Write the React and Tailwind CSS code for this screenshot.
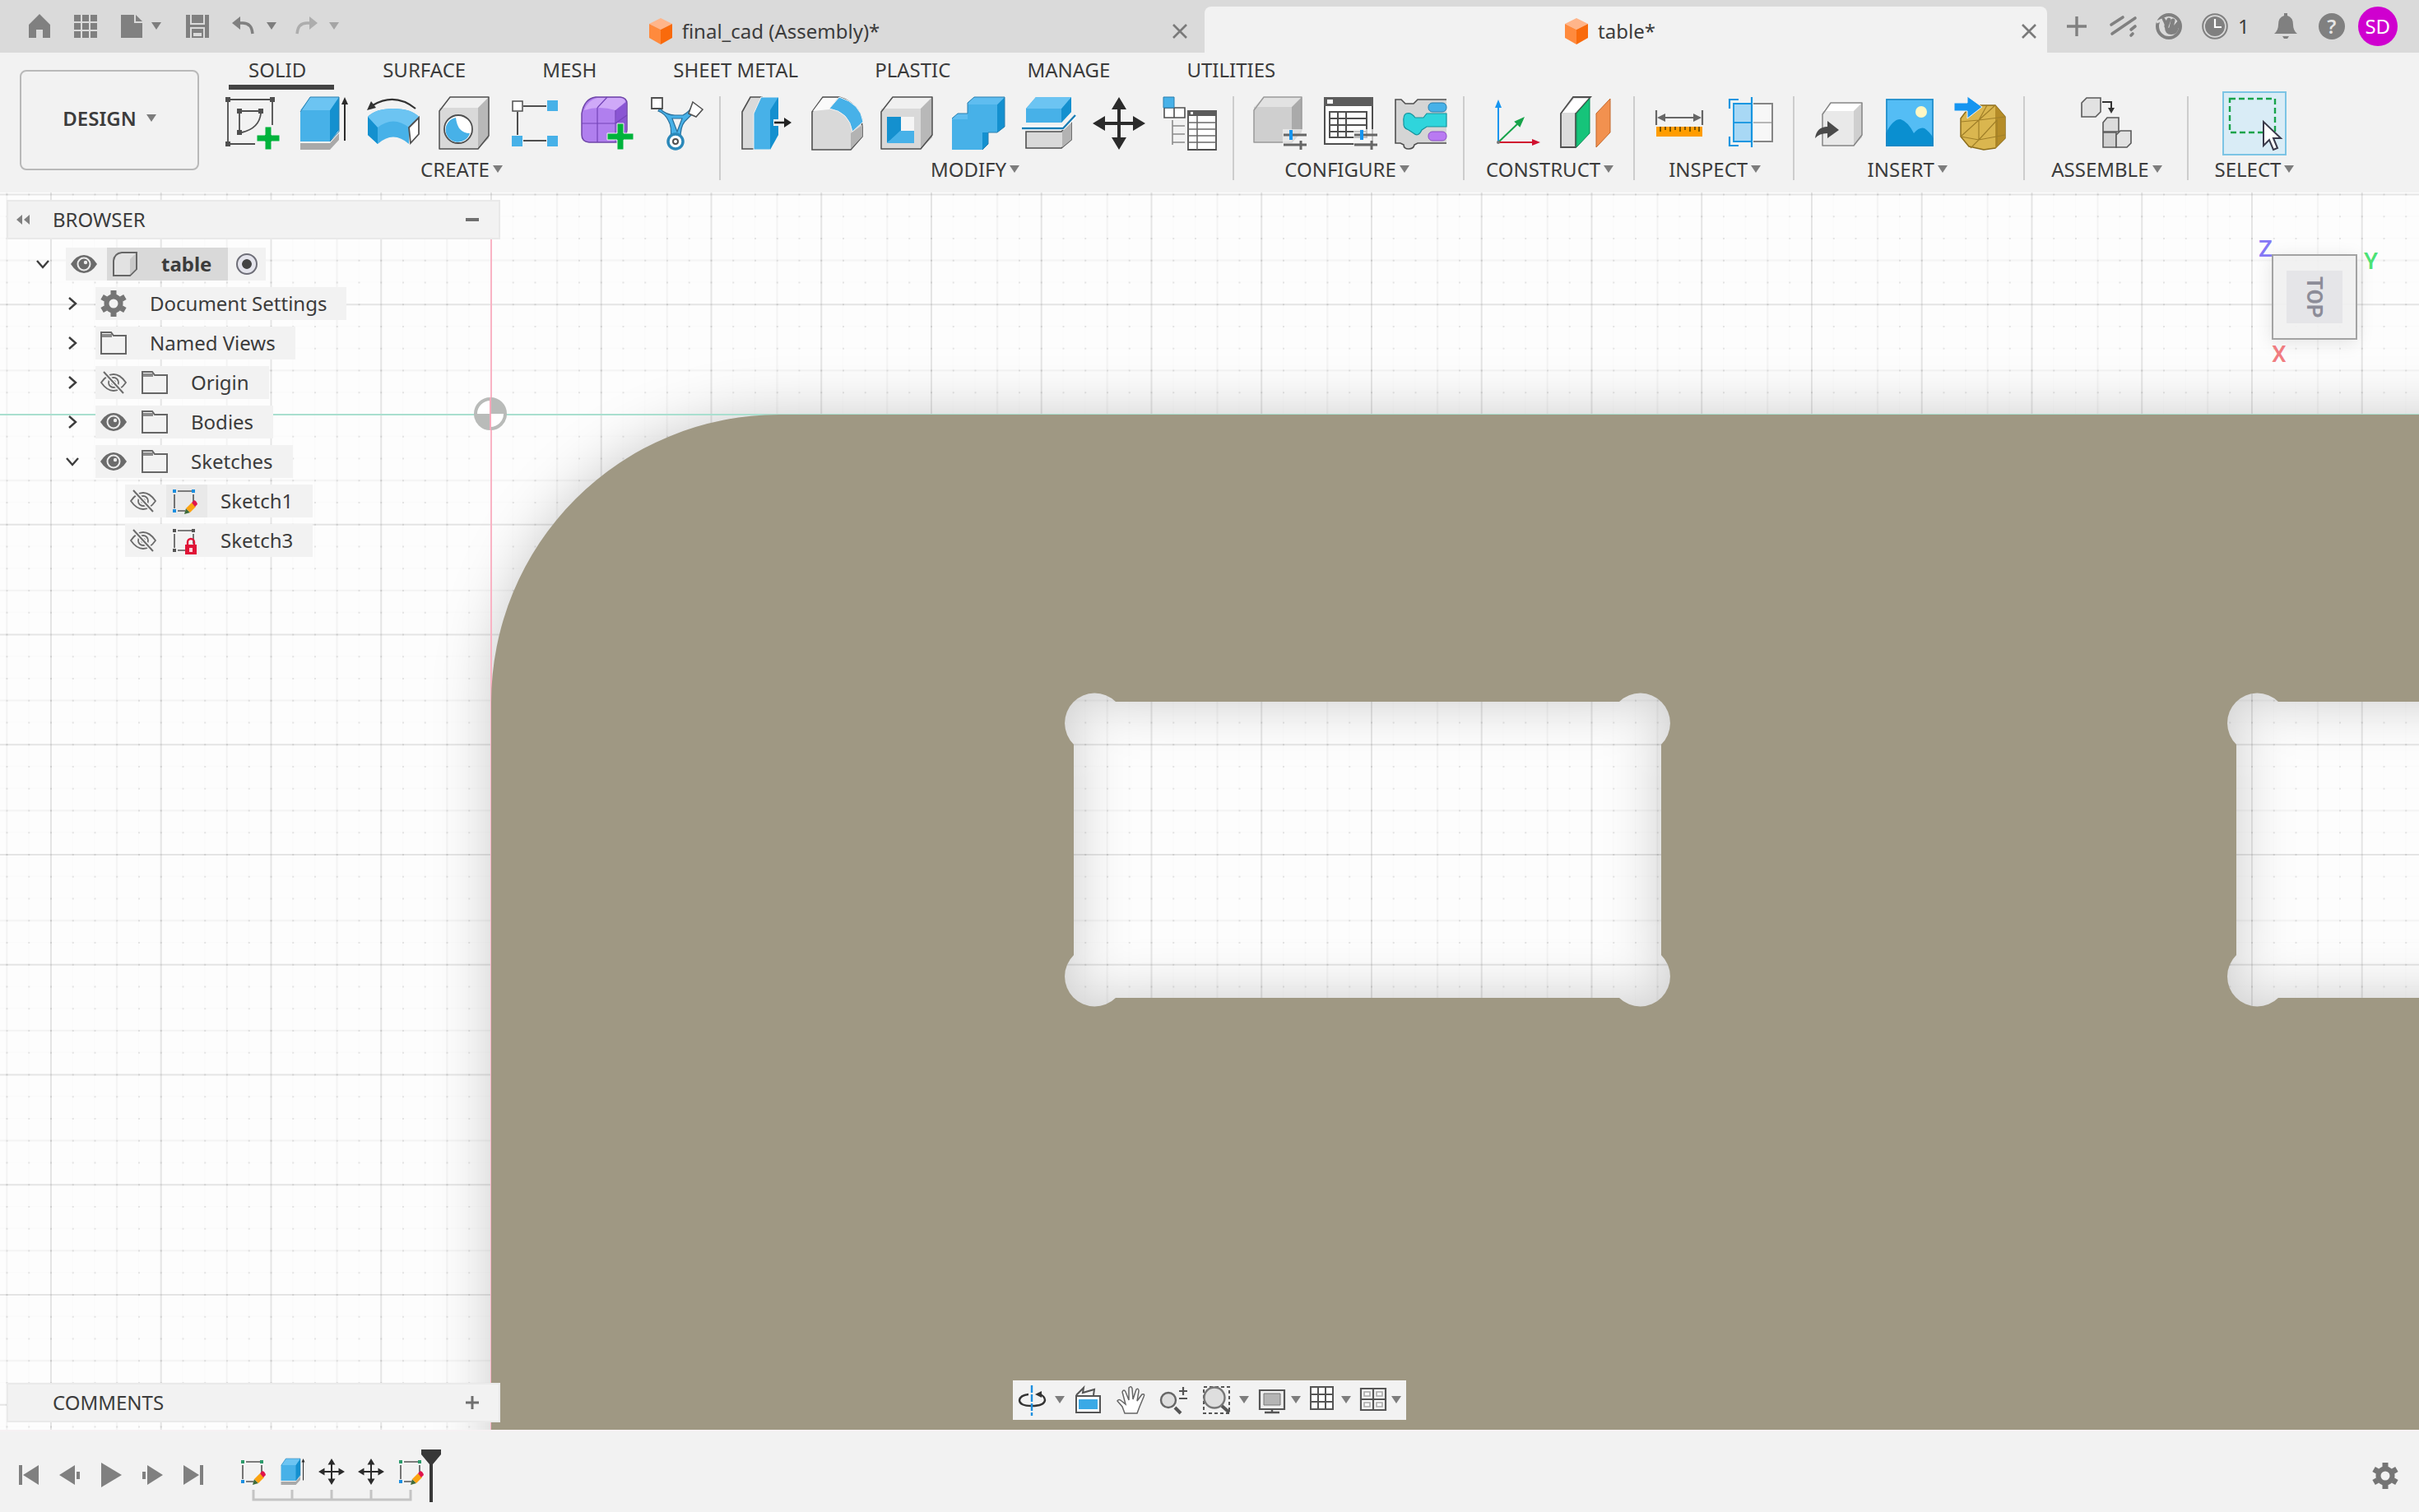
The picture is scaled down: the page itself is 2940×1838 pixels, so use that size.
import React, { useState } from 'react';
import clsx from 'clsx';

const BLUE = '#47b1e8';
const DARK_BLUE = '#1490cf';
const LINE = '#4f4f4f';

// ---------- small shared glyphs ----------

function Caret({ className = 'text-[#7d7d7d]' }) {
  return (
    <svg viewBox="0 0 12 10" className={clsx('w-3 h-[10px] shrink-0', className)} fill="currentColor">
      <path d="M0 0H12L6 9Z" />
    </svg>
  );
}

function Icon({ size = 'w-16 h-16', box = '0 0 64 64', children }) {
  return (
    <svg viewBox={box} className={clsx('shrink-0 overflow-visible', size)} fill="none" aria-hidden="true">
      {children}
    </svg>
  );
}

function Plus({ x, y, r = 14 }) {
  return (
    <path
      d={`M${x - 4} ${y - r}h8v${r - 4}h${r - 4}v8h-${r - 4}v${r - 4}h-8v-${r - 4}h-${r - 4}v-8h${r - 4}z`}
      fill="#00b33c"
      stroke="#f2f2f2"
      strokeWidth="1"
    />
  );
}

function Cube({ x = 0, y = 0, w = 48, h = 48, d = 14, front = '#d9d9d9', top = '#f0f0f0', side = '#b8b8b8', stroke = LINE }) {
  return (
    <g stroke={stroke} strokeWidth="1.5" strokeLinejoin="round">
      <path d={`M${x} ${y + d}L${x + d} ${y}H${x + w + d}L${x + w} ${y + d}Z`} fill={top} stroke="none" />
      <path d={`M${x + w} ${y + d}L${x + w + d} ${y}V${y + h}L${x + w} ${y + h + d}Z`} fill={side} stroke="none" />
      <path d={`M${x} ${y + d}H${x + w}V${y + h + d}H${x}Z`} fill={front} stroke="none" />
      <path d={`M${x} ${y + d + 4}L${x + d} ${y}H${x + w + d}V${y + h - 3}L${x + w} ${y + h + d}H${x}Z`} />
    </g>
  );
}

function Sliders() {
  return (
    <g>
      <path d="M37 39h28v25h-28z" fill="#f2f2f2" opacity="0.7" />
      <path d="M38 46h28M38 58h28M59 53v11" stroke="#666" strokeWidth="3" />
      <path d="M47 40v12" stroke="#1595f0" strokeWidth="4" />
    </g>
  );
}

function MoveGlyph() {
  return (
    <g fill="#2b2b2b">
      <path d="M30 12h4v40h-4z" />
      <path d="M12 30h40v4h-40z" />
      <path d="M32 0l9 15h-18zM32 64l9-15h-18zM0 32l15-9v18zM64 32l-15-9v18z" />
    </g>
  );
}

function SketchGlyph({ accent = '#1c8fe0', top = '#1c8fe0', badge = 'pencil' }) {
  return (
    <g>
      <path d="M4 4H27M4 4V28M27 4V20M4 28H17" stroke="#555" strokeWidth="1.6" strokeDasharray="17 4" strokeDashoffset="-4" />
      <path d="M2 2h4v4h-4zM25 2h4v4h-4z" fill={top} />
      <path d="M2 26h4v4h-4z" fill={accent} />
      {badge === 'pencil' && (
        <g>
          <path d="M16 32l2-7 5 5z" fill="#3f6b3a" />
          <path d="M18 25l7-7 5 5-7 7z" fill="#fba311" />
          <path d="M25 18l3-3q3 1 4 5l-3 3z" fill="#e0144c" />
        </g>
      )}
      {badge === 'lock' && (
        <g>
          <path d="M20 22v-4a4 4 0 0 1 8 0v4" stroke="#e01336" strokeWidth="2.4" />
          <path d="M17 21h14v12h-14z" fill="#e01336" />
          <path d="M22 25h4v5h-4z" fill="#ffd0d8" />
        </g>
      )}
    </g>
  );
}

function ExtrudeGlyph() {
  return (
    <g>
      <path d="M5 56H41L52 44V52L41 64H5Z" fill="#a9a9a9" />
      <path d="M5 18L17 0H52V40L41 54H5Z" fill={BLUE} />
      <path d="M41 16L52 0V40L41 54Z" fill={DARK_BLUE} />
      <path d="M5 16L17 0H52L41 16Z" fill="#6cc4f2" />
      <path d="M5 18L17 0H52V42L41 54" stroke="#2a7fae" strokeWidth="1" />
      <path d="M59 6V53" stroke="#2b2b2b" strokeWidth="2" />
      <path d="M59 0l4 9h-8z" fill="#2b2b2b" />
    </g>
  );
}

// ---------- ribbon icons ----------

const ICONS = {
  sketch: (
    <g>
      <path d="M6 3H54M3 6V54M57 6V34M6 57H36M20 17H40M17 20V40M43 20Q41 38 20 43" stroke={LINE} strokeWidth="1.8" />
      <path d="M0 0h6v6h-6zM54 0h6v6h-6zM0 54h6v6h-6zM14 14h6v6h-6zM40 14h6v6h-6zM14 40h6v6h-6z" fill={LINE} />
      <Plus x={52} y={50} />
    </g>
  ),
  extrude: <ExtrudeGlyph />,
  revolve: (
    <g>
      <path d="M1 24Q10 14 32 14Q54 14 63 24L51 36V57Q32 40 13 57L1 46Z" fill={BLUE} />
      <path d="M1 24Q10 14 32 14Q54 14 63 24L51 37Q32 22 13 37Z" fill="#6cc4f2" />
      <path d="M1 24L13 37V57L1 46Z" fill={DARK_BLUE} />
      <path d="M51 37L63 25V45L53 56Z" fill="#fff" stroke={LINE} strokeWidth="1.8" />
      <path d="M59 14Q34 -6 7 10" stroke="#333" strokeWidth="2.2" />
      <path d="M0 16l5-11 6 8z" fill="#333" />
    </g>
  ),
  hole: (
    <g>
      <Cube x={2} y={0} w={47} h={50} d={13} />
      <circle cx="25" cy="39" r="17" fill="#fff" stroke={LINE} strokeWidth="1.8" />
      <path d="M22 25A15 15 0 1 0 39 44Q24 44 22 25Z" fill={BLUE} />
    </g>
  ),
  pattern: (
    <g>
      <path d="M18 11H46M11 18V46M18 53H46" stroke={LINE} strokeWidth="2" />
      <path d="M5 5h12v12h-12z" fill="#fff" stroke={LINE} strokeWidth="1.5" />
      <path d="M47 4h13v13h-13zM4 47h13v13h-13zM47 47h13v13h-13z" fill={BLUE} />
    </g>
  ),
  form: (
    <g>
      <path d="M3 20Q6 2 20 0H50Q58 1 58 8V40Q56 54 46 55H12Q3 54 3 46Z" fill="#b07fee" stroke="#6f46a8" strokeWidth="1.5" />
      <path d="M6 16Q10 4 22 1H50Q56 2 56 6L44 16Q24 10 6 16Z" fill="#cfa9f8" />
      <path d="M44 16L57 6V40Q55 50 46 54Z" fill="#8a55d3" />
      <path d="M3 32H44L58 22M22 13V55M22 13L34 0M44 16V54" stroke="#7444b8" strokeWidth="1.2" />
      <Plus x={50} y={48} r={16} />
    </g>
  ),
  joint: (
    <g>
      <path d="M12 14Q20 22 30 22H40Q48 18 50 12L54 18Q46 26 42 30Q37 36 37 50H25Q27 36 22 28Q18 20 10 17Z" fill={BLUE} stroke="#2a6f9a" strokeWidth="1.2" />
      <path d="M27 26H39L33 42Z" fill="#f2f2f2" stroke="#2a6f9a" strokeWidth="1.2" />
      <path d="M2 1h13v13h-13z" fill="#fff" stroke={LINE} strokeWidth="1.8" />
      <path d="M52 6L64 15L56 24L47 20Z" fill="#fff" stroke={LINE} strokeWidth="1.5" />
      <circle cx="31" cy="54" r="9" fill="#fff" stroke="#2b88b9" strokeWidth="3.5" />
      <circle cx="31" cy="54" r="3" fill="#fff" stroke={LINE} strokeWidth="2" />
    </g>
  ),
  pressPull: (
    <g>
      <path d="M4 18L14 0H28V63H4Z" fill="#dadada" stroke={LINE} strokeWidth="1.6" />
      <path d="M18 20L27 0H48V46L38 64H18Z" fill={BLUE} stroke="#f2f2f2" strokeWidth="1" />
      <path d="M38 16L48 0V46L38 64Z" fill={DARK_BLUE} />
      <path d="M42 27h20v8h-20z" fill="#f2f2f2" />
      <path d="M43 31H58" stroke="#222" strokeWidth="2.6" />
      <path d="M64 31l-9-6v12z" fill="#222" />
    </g>
  ),
  fillet: (
    <g>
      <path d="M3 18L16 0H36Q62 8 64 36V48L50 64H3Z" fill="#d9d9d9" stroke={LINE} strokeWidth="1.6" />
      <path d="M50 44L64 34V48L50 63Z" fill="#b3b3b3" />
      <path d="M4 17L16 1H34L24 15Z" fill="#fafafa" />
      <path d="M24 14L36 0Q62 8 65 30L52 42Q48 18 24 14Z" fill={BLUE} stroke="#f2f2f2" strokeWidth="1" />
    </g>
  ),
  shell: (
    <g>
      <Cube x={1} y={0} w={48} h={49} d={14} />
      <path d="M8 24h33v32h-33z" fill="#fff" />
      <path d="M8 24h17v18l-17 14z" fill={DARK_BLUE} />
      <path d="M8 56l16-15h17v15z" fill={BLUE} />
      <path d="M25 24h16v17h-16z" fill="#f5f5f5" />
    </g>
  ),
  combine: (
    <g>
      <path d="M1 26L8 20H20V7L28 0H65V36L56 43H45V57L38 64H1Z" fill={BLUE} />
      <path d="M56 9L65 0V36L56 43ZM38 43H45V57L38 64Z" fill={DARK_BLUE} />
      <path d="M20 8L28 0H65L56 9H20ZM1 27L8 20H20V27Z" fill="#5fbdf0" />
      <path d="M1 26L8 20H20V7L28 0H65V36L56 43H45V57L38 64" stroke="#2a7fae" strokeWidth="1" />
    </g>
  ),
  split: (
    <g>
      <path d="M5 42H48L60 30V52L48 62H5Z" fill="#d9d9d9" stroke={LINE} strokeWidth="1.6" />
      <path d="M49 42L60 30V52L49 61Z" fill="#b3b3b3" />
      <path d="M0 35H50L66 20V25L51 40H0Z" fill="#fff" />
      <path d="M0 38H50L65 22" stroke="#1b7eb5" strokeWidth="2.4" />
      <path d="M5 14L17 0H60V18L48 31H5Z" fill={BLUE} />
      <path d="M48 14L60 0V18L48 31Z" fill={DARK_BLUE} />
      <path d="M5 14L17 0H60L48 14Z" fill="#6cc4f2" />
    </g>
  ),
  move: <MoveGlyph />,
  parameters: (
    <g>
      <path d="M1 13H26V25H1ZM13 13V25" fill="#fff" stroke={LINE} strokeWidth="1.6" />
      <path d="M0 0h13v13h-13z" fill={BLUE} stroke="#2a7fae" strokeWidth="1" />
      <path d="M11 28V58M11 35H26M11 45H26M11 55H26" stroke="#8b8b8b" strokeWidth="1.6" />
      <path d="M30 17h34v47h-34z" fill="#fff" stroke={LINE} strokeWidth="1.8" />
      <path d="M30 16h34v7h-34z" fill="#5c5c5c" />
      <path d="M33 18h3v3h-3z" fill="#fff" />
      <path d="M30 31H64M30 39H64M30 47H64M30 55H64M41 23V64" stroke="#6b6b6b" strokeWidth="1.6" />
    </g>
  ),
  configure: (
    <g>
      <Cube x={2} y={0} w={46} h={43} d={12} stroke="#9a9a9a" front="#cfcfcf" top="#e2e2e2" side="#aaa" />
      <Sliders />
    </g>
  ),
  configTable: (
    <g>
      <path d="M2 1h58v56h-58z" fill="#fff" stroke={LINE} strokeWidth="2" />
      <path d="M1 0h60v11h-60z" fill="#5c5c5c" />
      <path d="M5 3h7v5h-7z" fill="#fff" />
      <path d="M8 18h45v31h-45zM8 26H53M8 34H53M8 42H53M18 18V49M28 18V49" stroke={LINE} strokeWidth="2" />
      <Sliders />
    </g>
  ),
  puzzle: (
    <g>
      <path d="M2 3H9L14 8H24L29 3H64V56H29L25 58Q24 63 18 63Q12 63 12 58L8 56H2Z" fill="#d5d5d5" />
      <path d="M64 3H29L24 8H14L9 3H2V56H8L12 58Q12 63 18 63Q24 63 25 58L29 56H64" stroke={LINE} strokeWidth="1.6" />
      <path d="M64 20H40L36 25H26Q21 18 15 20Q11 22 12 31Q11 38 18 40L24 44Q30 49 34 40L40 36H64Z" fill="#2fd5dc" stroke="#15939c" strokeWidth="1.2" />
      <rect x="42" y="7" width="22" height="11" rx="5" fill={BLUE} stroke="#2a7fae" />
      <rect x="42" y="42" width="22" height="11" rx="5" fill="#b97af2" stroke="#8b50c7" />
    </g>
  ),
  axes: (
    <g>
      <path d="M12 54V10" stroke="#1595f0" strokeWidth="2" />
      <path d="M12 3l4 10h-8z" fill="#1595f0" />
      <path d="M12 55L37 31" stroke="#17a34a" strokeWidth="2" />
      <path d="M42 26l-4 9-5-5z" fill="#17a34a" stroke="#17a34a" strokeWidth="2" />
      <path d="M12 55H56" stroke="#d0102f" strokeWidth="2" />
      <path d="M63 55l-10 4v-8z" fill="#d0102f" />
      <circle cx="12" cy="55" r="2" fill="#777" />
    </g>
  ),
  planes: (
    <g>
      <path d="M2 20L17 0H38L20 20V61H2Z" fill="#dcdcdc" stroke={LINE} strokeWidth="1.8" />
      <path d="M4 19L18 2H35L20 19Z" fill="#fff" />
      <path d="M21 20L37 2V44L21 61Z" fill="#16c47a" stroke="#0b8a53" />
      <path d="M45 20L62 2V43L45 61Z" fill="#f2914f" stroke="#c2662a" />
    </g>
  ),
  measure: (
    <g>
      <path d="M4 16V34M60 16V34M10 25H54" stroke="#666" strokeWidth="2.2" />
      <path d="M5 25l10-5v10zM59 25l-10-5v10z" fill="#666" />
      <path d="M4 36h56v12h-56z" fill="#ff9d00" />
      <path d="M9 36v6M15 36v4M21 36v6M27 36v4M33 36v6M39 36v4M45 36v6M51 36v4M56 36v6" stroke="#5b4300" strokeWidth="1.6" />
    </g>
  ),
  section: (
    <g>
      <path d="M12 8h22v46h-22z" fill="#a8d8f5" stroke="#1595e0" strokeWidth="1.8" />
      <path d="M12 31H34" stroke="#1595e0" strokeWidth="1.8" />
      <path d="M36 8H59V54H36M36 31H59" stroke="#858585" strokeWidth="2" />
      <path d="M36 9h22v44h-22z" fill="#fff" opacity="0.4" />
      <path d="M18 3H7V14M7 48V59H18M34 0V61" stroke="#1595e0" strokeWidth="2.2" />
    </g>
  ),
  derive: (
    <g>
      <Cube x={12} y={7} w={38} h={42} d={10} front="#e9e9e9" top="#fff" side="#cfcfcf" stroke="#858585" />
      <path d="M3 50Q5 36 18 36V29L32 40L18 50V44Q8 44 3 50Z" fill="#4a4a4a" />
    </g>
  ),
  canvas: (
    <g>
      <path d="M3 2h58v58h-58z" fill="#54bdf5" />
      <path d="M3 44Q12 26 21 27Q30 30 37 44Q44 36 50 38Q56 42 61 50V60H3Z" fill="#0a8fd0" />
      <circle cx="46" cy="18" r="7" fill="#fff8c4" />
      <path d="M4 3h56v56h-56z" stroke="#1e88c4" strokeWidth="1.5" />
    </g>
  ),
  mesh: (
    <g>
      <path d="M20 10H50L62 24V50L50 62L36 64L18 60L8 48V26Z" fill="#dab64f" stroke="#8d6e1c" strokeWidth="1.5" />
      <path d="M50 10L62 24V50L50 62Z" fill="#b58c28" />
      <path d="M8 30L30 28L62 24M8 48L30 52L62 46M30 28L30 52L20 62M50 10L30 28L8 48M30 52L52 28V60M30 28L40 10" stroke="#a07f28" strokeWidth="1.2" />
      <path d="M0 7H16V-1L34 12L16 26V17H0Z" fill="#1595f0" stroke="#f2f2f2" strokeWidth="1" />
    </g>
  ),
  assemble: (
    <g stroke="#5a5a5a" strokeWidth="1.6">
      <path d="M2 7L8 1H25V18L19 24H2Z" fill="#e2e2e2" />
      <path d="M28 31L33 25H47V42H28Z" fill="#dcdcdc" />
      <path d="M28 43H44V61H28Z" fill="#d0d0d0" />
      <path d="M44 46L49 41H62V56L57 61H44Z" fill="#e2e2e2" />
      <path d="M27 6H38V15" stroke="#333" strokeWidth="2" />
      <path d="M38 20l-4-7h8z" fill="#333" stroke="none" />
    </g>
  ),
  select: (
    <g>
      <path d="M2 2H57V43H2Z" stroke="#17a34a" strokeWidth="2.4" strokeDasharray="7 4" />
      <path d="M43 30V59L50 52L55 64L60 62L55 50H64Z" fill="#fff" stroke="#3a3a4a" strokeWidth="2" />
    </g>
  ),
};

const RIBBON_TABS = ['SOLID', 'SURFACE', 'MESH', 'SHEET METAL', 'PLASTIC', 'MANAGE', 'UTILITIES'];

const GROUPS = [
  { label: 'CREATE', tools: ['sketch', 'extrude', 'revolve', 'hole', 'pattern', 'form', 'joint'] },
  { label: 'MODIFY', tools: ['pressPull', 'fillet', 'shell', 'combine', 'split', 'move', 'parameters'] },
  { label: 'CONFIGURE', tools: ['configure', 'configTable', 'puzzle'] },
  { label: 'CONSTRUCT', tools: ['axes', 'planes'] },
  { label: 'INSPECT', tools: ['measure', 'section'] },
  { label: 'INSERT', tools: ['derive', 'canvas', 'mesh'] },
  { label: 'ASSEMBLE', tools: ['assemble'] },
  { label: 'SELECT', tools: ['select'] },
];

// ---------- title bar ----------

function BarButton({ label, className, children }) {
  return (
    <button type="button" aria-label={label} className={clsx('flex items-center justify-center shrink-0', className)}>
      {children}
    </button>
  );
}

function QuickAccess() {
  return (
    <div className="w-[440px] shrink-0 flex items-center pl-8 text-[#808080]">
      <BarButton label="Home" className="w-8 mr-6">
        <Icon size="w-8 h-8" box="0 0 32 32">
          <path d="M16 1L29 14V30H20V20H12V30H3V14Z" fill="currentColor" />
        </Icon>
      </BarButton>
      <BarButton label="Data panel" className="w-8 mr-6">
        <Icon size="w-8 h-8" box="0 0 32 32">
          <path d="M2 2h8v8h-8zM12 2h8v8h-8zM22 2h8v8h-8zM2 12h8v8h-8zM12 12h8v8h-8zM22 12h8v8h-8zM2 22h8v8h-8zM12 22h8v8h-8zM22 22h8v8h-8z" fill="currentColor" />
        </Icon>
      </BarButton>
      <BarButton label="File" className="gap-2 mr-7">
        <Icon size="w-8 h-8" box="0 0 32 32">
          <path d="M3 2H19V12H29V30H3Z" fill="currentColor" />
          <path d="M21 2L29 10H21Z" fill="currentColor" />
        </Icon>
        <Caret />
      </BarButton>
      <BarButton label="Save" className="w-8 mr-6">
        <Icon size="w-8 h-8" box="0 0 32 32">
          <path d="M2 2H30V30H2Z" fill="currentColor" />
          <path d="M8 2V13H24V2M8 30V18H24V30" stroke="#dadada" strokeWidth="2" />
          <path d="M11 24h10v4h-10z" fill="#dadada" />
        </Icon>
      </BarButton>
      <BarButton label="Undo" className="gap-3 mr-5">
        <Icon size="w-8 h-8" box="0 0 32 32">
          <path d="M8 12H15Q26 12 27 25" stroke="currentColor" strokeWidth="3.4" />
          <path d="M2 12L12 4V20Z" fill="currentColor" />
        </Icon>
        <Caret />
      </BarButton>
      <BarButton label="Redo" className="gap-3 text-[#adadad]">
        <Icon size="w-8 h-8" box="0 0 32 32">
          <path d="M24 12H17Q6 12 5 25" stroke="currentColor" strokeWidth="3.4" />
          <path d="M30 12L20 4V20Z" fill="currentColor" />
        </Icon>
        <Caret className="text-[#a5a5a5]" />
      </BarButton>
    </div>
  );
}

function DocCube() {
  return (
    <Icon size="w-7 h-8" box="0 0 28 32">
      <path d="M14 0L28 7L14 14L0 7Z" fill="#ffb58a" />
      <path d="M0 7L14 14V32L0 24Z" fill="#ff8a3d" />
      <path d="M28 7L14 14V32L28 24Z" fill="#f96a0c" />
    </Icon>
  );
}

function DocTab({ title, active, onSelect }) {
  return (
    <div className={clsx('flex items-center mt-2 pt-1', active ? 'pr-[6px] bg-[#f2f2f2] rounded-t-lg' : 'pr-[14px]')}>
      <button type="button" onClick={onSelect} className="flex-1 flex items-center justify-center gap-3">
        <DocCube />
        <span>{title}</span>
      </button>
      <button type="button" aria-label={`Close ${title}`} className="w-8 h-8 flex items-center justify-center">
        <Icon size="w-[18px] h-[18px]" box="0 0 18 18">
          <path d="M1 1L17 17M17 1L1 17" stroke="#7a7a7a" strokeWidth="2.6" />
        </Icon>
      </button>
    </div>
  );
}

function StatusIcons() {
  return (
    <div className="w-[452px] shrink-0 flex items-center gap-6 pl-5 text-[#808080]">
      <BarButton label="New tab" className="w-8">
        <Icon size="w-6 h-6" box="0 0 24 24">
          <path d="M12 0V24M0 12H24" stroke="currentColor" strokeWidth="3.4" />
        </Icon>
      </BarButton>
      <BarButton label="Job status" className="w-8">
        <Icon size="w-8 h-8" box="0 0 32 32">
          <path d="M2 14L16 5M3 25L31 6M26 20L31 16M26 27L28 25" stroke="currentColor" strokeWidth="3.6" strokeLinecap="round" />
        </Icon>
      </BarButton>
      <BarButton label="Extensions" className="w-8">
        <Icon size="w-8 h-8" box="0 0 32 32">
          <circle cx="16" cy="16" r="14" stroke="currentColor" strokeWidth="4" />
          <path d="M7 5Q13 10 13 17Q13 24 19 24Q25 24 26 17L30 14" stroke="currentColor" strokeWidth="4" />
          <path d="M13 16L16 8M19 17L21 9M22 19L28 12M16 20H22" stroke="currentColor" strokeWidth="5" strokeLinecap="round" />
          <path d="M1 11L8 8" stroke="#dadada" strokeWidth="3" />
        </Icon>
      </BarButton>
      <BarButton label="Recovery, 1 item" className="gap-3 mr-1 text-[24px] text-[#3c3c3c]">
        <Icon size="w-8 h-8" box="0 0 32 32">
          <circle cx="16" cy="16" r="14.8" stroke="#808080" strokeWidth="2" />
          <circle cx="16" cy="16" r="12" fill="#808080" />
          <path d="M16 7V17H24" stroke="#fff" strokeWidth="2.2" />
        </Icon>
        <span>1</span>
      </BarButton>
      <BarButton label="Notifications" className="w-8">
        <Icon size="w-8 h-8" box="0 0 32 32">
          <path d="M14 0h4v3Q25 5 25 14Q25 21 30 25H2Q7 21 7 14Q7 5 14 3Z" fill="currentColor" />
          <path d="M12 28H20L18 31H14Z" fill="currentColor" />
        </Icon>
      </BarButton>
      <BarButton label="Help" className="w-8 h-8 rounded-full bg-[#808080] text-[#e6e6e6] text-[24px] leading-8 font-semibold">
        ?
      </BarButton>
      <BarButton label="Account" className="w-12 h-12 -ml-2 rounded-full bg-[#cf00cf] text-white text-[24px]">
        SD
      </BarButton>
    </div>
  );
}

function TitleBar() {
  const [active, setActive] = useState('table*');
  return (
    <header className="h-16 flex bg-[#dadada]">
      <QuickAccess />
      <div className="flex-1 grid grid-cols-2">
        {['final_cad (Assembly)*', 'table*'].map((title) => (
          <DocTab key={title} title={title} active={active === title} onSelect={() => setActive(title)} />
        ))}
      </div>
      <StatusIcons />
    </header>
  );
}

// ---------- ribbon ----------

function ToolGroup({ label, tools }) {
  return (
    <div className="flex flex-col items-center relative pb-[11px]">
      <div className="flex px-[11px]">
        {tools.map((tool) => (
          <button
            key={tool}
            type="button"
            aria-label={tool}
            className={clsx(
              'h-[78px] flex items-center justify-center',
              tool === 'select' ? 'w-[78px] bg-[#d9ecf6] border-2 border-[#7cc4e4]' : 'w-[86px]'
            )}
          >
            <Icon>{ICONS[tool]}</Icon>
          </button>
        ))}
      </div>
      <button
        type="button"
        className={clsx(
          'h-[34px] flex items-center gap-1 leading-8',
          tools.length === 1 && 'px-8',
          tools.length === 2 && 'px-[26px]',
          tools.length > 2 && 'pl-6 pr-[30px]'
        )}
      >
        {label}
        <Caret />
      </button>
      {label !== 'SELECT' && <span className="absolute right-0 top-[6px] bottom-[15px] w-[2px] bg-[#cdcdcd]" />}
    </div>
  );
}

function Ribbon() {
  const [tab, setTab] = useState('SOLID');
  return (
    <div className="flex bg-[#f2f2f2]">
      <div className="w-[252px] shrink-0 pl-6 pr-[10px] pt-[21px]">
        <button
          type="button"
          className="w-full h-[122px] pb-1 flex items-center justify-center gap-3 font-semibold border-2 border-[#b9b9b9] rounded-lg"
        >
          DESIGN
          <Caret />
        </button>
      </div>
      <div>
        <nav className="flex gap-[35px] pl-[26px] mb-[2px]">
          {RIBBON_TABS.map((name) => (
            <button
              key={name}
              type="button"
              onClick={() => setTab(name)}
              className={clsx(
                'h-[45px] pl-6 pr-[34px] pt-[2px] border-b-[6px] leading-8 whitespace-nowrap',
                tab === name ? 'border-[#444444]' : 'border-transparent'
              )}
            >
              {name}
            </button>
          ))}
        </nav>
        <div className="flex">
          {GROUPS.map((group) => (
            <ToolGroup key={group.label} {...group} />
          ))}
        </div>
      </div>
    </div>
  );
}

// ---------- viewport ----------

// Each slot is a rectangle with relief circles at the four corners.
function slotPath(x, y) {
  return [
    `M${x} ${y + 52}`,
    `A36 36 0 1 1 ${x + 51} ${y}`,
    `H${x + 663}`,
    `A36 36 0 1 1 ${x + 714} ${y + 52}`,
    `V${y + 308}`,
    `A36 36 0 1 1 ${x + 663} ${y + 360}`,
    `H${x + 51}`,
    `A36 36 0 1 1 ${x} ${y + 308}`,
    'Z',
  ].join('');
}

const BODY = `M597 2200V620A350 350 0 0 1 947 270H6000V2200Z${slotPath(1305, 619)}${slotPath(2718, 619)}`;

function Viewport() {
  return (
    <svg className="absolute inset-0 w-full h-full" aria-hidden="true">
      <defs>
        <pattern id="minor" x="596" y="269" width="26.75" height="26.75" patternUnits="userSpaceOnUse">
          <path d="M0 0.5H26.75M0.5 0V26.75" stroke="#fafafa" strokeWidth="1" />
          <path d="M0 0h2v2h-2z" fill="#e3e3e3" />
        </pattern>
        <pattern id="major" x="596" y="269" width="133.75" height="133.75" patternUnits="userSpaceOnUse">
          <path d="M0 81H133.75M81 0V133.75" stroke="#000" strokeOpacity="0.03" strokeWidth="2" />
          <path d="M0 1H133.75M1 0V133.75" stroke="#000" strokeOpacity="0.09" strokeWidth="2" />
        </pattern>
        <filter id="soft" filterUnits="userSpaceOnUse" x="300" y="0" width="3600" height="1800">
          <feGaussianBlur stdDeviation="34" />
        </filter>
      </defs>
      <rect width="100%" height="100%" fill="#fdfdfd" />
      <rect width="100%" height="100%" fill="url(#minor)" />
      <path d={BODY} fill="#000" fillOpacity="0.2" fillRule="evenodd" filter="url(#soft)" />
      <rect width="100%" height="100%" fill="url(#major)" />
      <path d="M597 56V1600" stroke="#f9b3c4" strokeWidth="2" />
      <path d="M0 270H6000" stroke="#a9dfcf" strokeWidth="2" />
      <path d={BODY} fill="#9f9883" fillRule="evenodd" />
      <g>
        <circle cx="596" cy="269" r="18" fill="#fff" stroke="#b9bbb9" strokeWidth="4" />
        <path d="M596 269V251A18 18 0 0 1 614 269ZM596 269V287A18 18 0 0 1 578 269Z" fill="#b9bbb9" />
        <path d="M596 249V289" stroke="#f7a8bb" strokeWidth="2" />
      </g>
    </svg>
  );
}

function ViewCube() {
  return (
    <div className="absolute top-[75px] right-[75px] w-[104px] h-[104px] font-['Roboto','Liberation_Sans',sans-serif] text-[28px] leading-7 font-medium">
      <button
        type="button"
        className="w-full h-full flex items-center justify-center bg-[#f0f0f0]/90 border-2 border-[#a3a3a3] shadow-[0_4px_20px_rgba(0,0,0,0.10)]"
      >
        <span className="w-[68px] h-16 flex items-center justify-center bg-[#e5e5e8] text-[#8c8c98] text-[26px] font-bold [writing-mode:vertical-rl]">
          TOP
        </span>
      </button>
      <span className="absolute -left-4 -top-5 text-[#8577f5]">Z</span>
      <span className="absolute left-full top-[-5px] ml-2 text-[#4be276]">Y</span>
      <span className="absolute left-0 top-full mt-1 text-[#f07c80]">X</span>
    </div>
  );
}

// ---------- browser tree ----------

function Eye({ off }) {
  return (
    <Icon size="w-8 h-8" box="0 0 32 32">
      {off ? (
        <g stroke="#6b6b6b" strokeWidth="1.8">
          <path d="M1 16Q8 6 16 6Q24 6 31 16Q24 26 16 26Q8 26 1 16Z" />
          <circle cx="16" cy="16" r="6" />
          <circle cx="16" cy="16" r="2" />
          <path d="M4 3L28 29" stroke="#f2f2f2" strokeWidth="5" />
          <path d="M4 3L28 29" strokeWidth="2" />
        </g>
      ) : (
        <g>
          <path d="M0 16Q7 5 16 5Q25 5 32 16Q25 27 16 27Q7 27 0 16Z" fill="#6b6b6b" />
          <circle cx="16" cy="16" r="7.5" fill="#6b6b6b" stroke="#ececec" strokeWidth="2" />
          <circle cx="18" cy="14" r="2.2" fill="#ececec" />
        </g>
      )}
    </Icon>
  );
}

function Gear({ size = 'w-8 h-8' }) {
  return (
    <Icon size={size} box="0 0 32 32">
      <circle cx="16" cy="16" r="8.5" stroke="#757575" strokeWidth="6" />
      <path d="M16 0V5M16 27V32M2.100 8L6.500 10.500M25.500 21.500L29.900 24M2.100 24L6.500 21.500M25.500 10.500L29.900 8" stroke="#757575" strokeWidth="7" />
    </Icon>
  );
}

const NODE_ICONS = {
  component: (
    <Icon size="w-8 h-8" box="0 0 32 32">
      <path d="M2 12Q3 3 12 2H30V22L22 30H2Z" fill="#e2e2e2" stroke="#666" strokeWidth="2" />
      <path d="M22 10L29 3V22L22 29Z" fill="#c9c9c9" />
    </Icon>
  ),
  settings: <Gear />,
  folder: (
    <Icon size="w-8 h-8" box="0 0 32 32">
      <path d="M1 3H13L16 7H31V29H1Z" fill="#f2f2f2" stroke="#666" strokeWidth="2" />
      <path d="M2 7H14" stroke="#8a8a8a" strokeWidth="4" />
    </Icon>
  ),
  sketch: (
    <Icon size="w-8 h-8" box="0 0 32 32">
      <SketchGlyph />
    </Icon>
  ),
  locked: (
    <Icon size="w-8 h-8" box="0 0 32 32">
      <SketchGlyph accent="#555" top="#555" badge="lock" />
    </Icon>
  ),
};

const TREE = [
  { name: 'table', icon: 'component', level: 0, open: true, eye: 'on', root: true },
  { name: 'Document Settings', icon: 'settings', level: 1, open: false },
  { name: 'Named Views', icon: 'folder', level: 1, open: false },
  { name: 'Origin', icon: 'folder', level: 1, open: false, eye: 'off' },
  { name: 'Bodies', icon: 'folder', level: 1, open: false, eye: 'on' },
  { name: 'Sketches', icon: 'folder', level: 1, open: true, eye: 'on' },
  { name: 'Sketch1', icon: 'sketch', level: 2, eye: 'off' },
  { name: 'Sketch3', icon: 'locked', level: 2, eye: 'off' },
];

const INDENT = ['pl-6', 'pl-[60px]', 'pl-24'];

function TreeRow({ node }) {
  return (
    <li className={clsx('h-10 flex', INDENT[node.level])}>
      {node.open === undefined ? (
        <span className="w-12" />
      ) : (
        <button type="button" aria-label={`Toggle ${node.name}`} className="w-12 flex items-center pl-3">
          <Icon size="w-4 h-4" box="0 0 16 16">
            <path d={node.open ? 'M1 4L8 12L15 4' : 'M4 1L12 8L4 15'} stroke="#3c3c3c" strokeWidth="2.4" />
          </Icon>
        </button>
      )}
      <div className="flex items-center bg-[#f2f2f2]">
        {node.eye && (
          <button type="button" aria-label={`Visibility of ${node.name}`} className="w-[50px] pl-[6px]">
            <Eye off={node.eye === 'off'} />
          </button>
        )}
        <button
          type="button"
          className={clsx('h-full flex items-center', node.root ? 'pr-5 bg-[#d9d9d9] font-bold' : 'pr-6')}
        >
          <span
            className={clsx(
              'h-full w-[50px] mr-4 pl-[6px] flex items-center',
              node.icon === 'sketch' && 'bg-[#e9e9e9]'
            )}
          >
            {NODE_ICONS[node.icon]}
          </span>
          {node.name}
        </button>
        {node.root && (
          <input
            type="radio"
            aria-label="Activate component"
            defaultChecked
            className="appearance-none w-[26px] h-[26px] mx-[10px] rounded-full border-2 border-[#6e6e78] bg-radial from-[#444] from-35% to-[#e4e4ec] to-40%"
          />
        )}
      </div>
    </li>
  );
}

function BrowserPanel() {
  return (
    <aside className="absolute left-2 top-[9px] w-[600px]">
      <div className="h-12 flex items-center pl-[10px] pr-6 bg-[#f2f2f2] border-2 border-[#e9e9e9]">
        <button type="button" aria-label="Collapse browser">
          <Icon size="w-4 h-4" box="0 0 16 16">
            <path d="M7 2V14L0 8ZM16 2V14L9 8Z" fill="#808080" />
          </Icon>
        </button>
        <h2 className="flex-1 pl-7">BROWSER</h2>
        <button type="button" aria-label="Minimise" className="w-4 h-4 flex items-center">
          <span className="w-full h-1 bg-[#6f6f6f]" />
        </button>
      </div>
      <ul className="flex flex-col gap-2 pt-[10px]">
        {TREE.map((node) => (
          <TreeRow key={node.name} node={node} />
        ))}
      </ul>
    </aside>
  );
}

function CommentsPanel() {
  return (
    <div className="absolute left-2 bottom-[9px] w-[600px] h-12 flex items-center justify-between pl-[54px] pr-6 bg-[#f2f2f2] border-2 border-[#eaeaea]">
      <h2>COMMENTS</h2>
      <button type="button" aria-label="Expand comments">
        <Icon size="w-4 h-4" box="0 0 16 16">
          <path d="M8 0V16M0 8H16" stroke="#6f6f6f" strokeWidth="3" />
        </Icon>
      </button>
    </div>
  );
}

// ---------- navigation bar ----------

const NAV = [
  {
    name: 'Orbit',
    menu: 'wide',
    art: (
      <g>
        <path d="M24 9Q32 12 32 17Q31 24 16 24Q1 24 1 17Q2 11 12 10" stroke="#333" strokeWidth="2.4" />
        <path d="M20 10l8-4v8z" fill="#333" />
        <path d="M16 -1V36" stroke="#1c8fe0" strokeWidth="2.4" strokeDasharray="9 2" />
      </g>
    ),
  },
  {
    name: 'Look at',
    art: (
      <g>
        <path d="M2 12H31V32H2Z" fill="#fff" stroke="#555" strokeWidth="2" />
        <path d="M5 16h23v12h-23z" fill="#3aa9e6" />
        <path d="M2 11L11 2L10 8L24 4L23 11" stroke="#555" strokeWidth="2" />
      </g>
    ),
  },
  {
    name: 'Pan',
    art: (
      <path
        d="M9 33L6 25L0 18Q2 15 5 18L10 22L6 7Q8 3 10 7L14 17L14 2Q17 -1 18 3L19 16L23 4Q26 2 26 6L24 18L30 10Q34 9 32 13L27 25L24 33Z"
        fill="#fff"
        stroke="#666"
        strokeWidth="1.5"
      />
    ),
  },
  {
    name: 'Zoom',
    art: (
      <g>
        <circle cx="10" cy="17" r="9" fill="#dedede" stroke="#666" strokeWidth="2.4" />
        <path d="M18 26L25 33" stroke="#555" strokeWidth="4" />
        <path d="M28 1V11M23 6H33M23 15H33" stroke="#555" strokeWidth="2.2" />
      </g>
    ),
  },
  {
    name: 'Fit',
    menu: 'wide',
    art: (
      <g>
        <path d="M1 1H32V33H1Z" stroke="#555" strokeWidth="2" strokeDasharray="4 3" />
        <circle cx="14" cy="14" r="12.5" fill="#dedede" stroke="#777" strokeWidth="2.4" />
        <path d="M23 24L32 32" stroke="#555" strokeWidth="4" />
      </g>
    ),
  },
  {
    name: 'Display settings',
    menu: 'tight',
    art: (
      <g>
        <path d="M1 5H31V28H1Z" fill="#eee" stroke="#555" strokeWidth="2.2" />
        <path d="M6 9h20v14h-20z" fill="#b5b5b5" stroke="#777" />
        <path d="M16 28V32M7 32H25" stroke="#555" strokeWidth="2.4" />
      </g>
    ),
  },
  {
    name: 'Grid and snaps',
    menu: 'tight',
    art: <path d="M2 1H29V28H2ZM11 1V28M20 1V28M2 10H29M2 19H29" fill="#fff" stroke="#555" strokeWidth="2" />,
  },
  {
    name: 'Viewports',
    menu: 'tight',
    art: (
      <g>
        <path d="M2 3H32V29H2ZM17 3V29M2 16H32" fill="#f7f7f7" stroke="#555" strokeWidth="2.2" />
        <path d="M6 7H13V12H6ZM21 7H28V12H21ZM6 20H13V25H6ZM21 20H28V25H21Z" stroke="#aaa" strokeWidth="1.6" />
      </g>
    ),
  },
];

function NavBar() {
  return (
    <div className="absolute inset-x-0 bottom-3 flex justify-center pointer-events-none">
      <div className="h-12 flex items-center pl-[7px] bg-[#f2f2f2] pointer-events-auto">
        {NAV.map((item) => (
          <button
            key={item.name}
            type="button"
            aria-label={item.name}
            className={clsx(
              'flex items-center last:mr-[6px]',
              !item.menu && 'mr-[18px]',
              item.menu === 'wide' && 'gap-[10px] mr-3',
              item.menu === 'tight' && 'gap-[5px] mr-[10px]'
            )}
          >
            <Icon size="w-[34px] h-[34px]" box="0 0 34 34">
              {item.art}
            </Icon>
            {item.menu && <Caret />}
          </button>
        ))}
      </div>
    </div>
  );
}

// ---------- timeline ----------

const PLAYBACK = [
  { name: 'Go to start', d: 'M1 1h4v24h-4zM25 1V25L6 13Z' },
  { name: 'Step back', d: 'M19 1V25L0 13ZM21 9h4v9h-4z' },
  { name: 'Play', d: 'M1 -2L26 13L1 28Z' },
  { name: 'Step forward', d: 'M7 1V25L26 13ZM1 9h4v9h-4z' },
  { name: 'Go to end', d: 'M1 1V25L20 13ZM21 1h4v24h-4z' },
];

const FEATURES = [
  { id: 1, box: '0 0 32 32', art: <SketchGlyph top="#2c9b6b" /> },
  { id: 2, box: '0 0 64 64', art: <ExtrudeGlyph /> },
  { id: 3, box: '0 0 64 64', art: <MoveGlyph /> },
  { id: 4, box: '0 0 64 64', art: <MoveGlyph /> },
  { id: 5, box: '0 0 32 32', art: <SketchGlyph top="#2c9b6b" /> },
];

function Timeline() {
  return (
    <footer className="h-[100px] shrink-0 flex items-start bg-[#f2f2f2] border-t-2 border-[#f6f1f3]">
      <div className="flex gap-6 pl-[22px] pt-10">
        {PLAYBACK.map((p) => (
          <button key={p.name} type="button" aria-label={p.name}>
            <Icon size="w-[26px] h-[26px]" box="0 0 26 26">
              <path d={p.d} fill="#808080" />
            </Icon>
          </button>
        ))}
      </div>
      <div className="pl-[43px] pt-[33px]">
        <div className="flex gap-4">
          {FEATURES.map((f) => (
            <button key={f.id} type="button" aria-label={`Feature ${f.id}`}>
              <Icon size="w-8 h-8" box={f.box}>
                {f.art}
              </Icon>
            </button>
          ))}
        </div>
        <svg viewBox="0 0 224 16" className="w-56 h-4 mt-1" fill="none" aria-hidden="true">
          <path d="M17 2V14H208V2M64 2V14M112 2V14M160 2V14" stroke="#c4c4c4" strokeWidth="3" />
        </svg>
      </div>
      <button type="button" aria-label="Timeline marker" className="-ml-[3px] pt-[22px]">
        <Icon size="w-6 h-16" box="0 0 24 64">
          <path d="M0 0H24V6L14 18V64H10V18L0 6Z" fill="#383838" />
        </Icon>
      </button>
      <button type="button" aria-label="Timeline settings" className="ml-auto mr-[25px] pt-[38px]">
        <Gear />
      </button>
    </footer>
  );
}

export default function App() {
  return (
    <div className="min-h-screen flex flex-col bg-[#f2f2f2] text-[#3c3c3c] text-[24px] leading-8 font-['Noto_Sans','Open_Sans',sans-serif] overflow-hidden">
      <TitleBar />
      <Ribbon />
      <main className="flex-1 relative overflow-hidden">
        <Viewport />
        <ViewCube />
        <BrowserPanel />
        <CommentsPanel />
        <NavBar />
      </main>
      <Timeline />
    </div>
  );
}
